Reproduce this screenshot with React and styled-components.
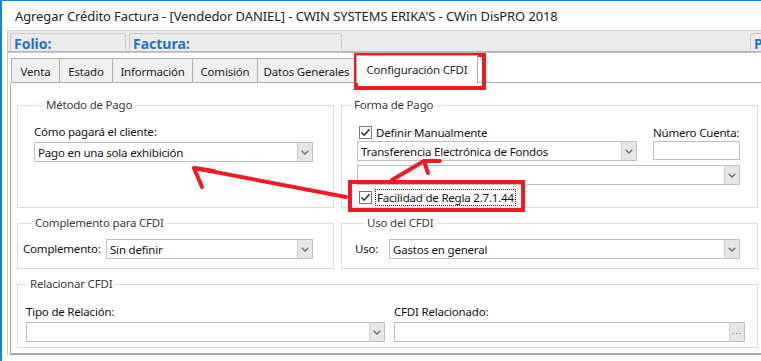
import React from 'react'
import styled, { createGlobalStyle } from 'styled-components'

const GlobalStyle = createGlobalStyle`
  html, body {
    margin: 0;
    padding: 0;
    background: #ffffff;
    overflow: hidden;
  }
  body {
    font-family: "Noto Sans", "Open Sans", sans-serif;
    font-size: 11.5px;
    letter-spacing: -0.2px;
    color: #000;
  }
`

const Window = styled.div`
  position: relative;
  width: 761px;
  height: 361px;
  box-sizing: border-box;
  border-top: 1px solid #1883d7;
  border-left: 2px solid #1883d7;
  background: #fff;
  overflow: hidden;
`

const TitleBar = styled.div`
  height: 29px;
  display: flex;
  align-items: center;
  padding-left: 13px;
  font-size: 13px;
  letter-spacing: -0.1px;
  color: #222;
  white-space: nowrap;
`

const Body = styled.div`
  padding-left: 5px;
`

const Frame = styled.div`
  border-left: 1px solid #c8c8c8;
  width: 900px;
`

const HeaderBand = styled.div`
  display: flex;
  gap: 3px;
  height: 23px;
  padding: 2px 0 0 2px;
  box-sizing: border-box;
  border-top: 1px solid #d6d6d6;
  border-bottom: 2px solid #b7b7b7;
  background: #ebebeb;
`

const HeaderField = styled.div`
  flex-shrink: 0;
  width: ${p => p.$width}px;
  margin-left: ${p => p.$offset || 0}px;
  height: 20px;
  box-sizing: border-box;
  border: 1px solid #c9c9c9;
  border-radius: 2px;
  padding-left: 3px;
  display: flex;
  align-items: center;
  font-weight: bold;
  font-size: 14px;
  letter-spacing: 0;
  color: #1a74cc;
`

const TabArea = styled.div`
  padding: 1px 0 0 2px;
`

const TabStrip = styled.div`
  display: flex;
  align-items: flex-end;
  height: 28px;
  border-bottom: 1px solid #adadad;
  margin-left: 1px;
`

const Tab = styled.div`
  position: relative;
  flex-shrink: 0;
  width: ${p => p.$width}px;
  height: ${p => (p.$active ? 28 : 24)}px;
  margin-right: ${p => (p.$active ? 0 : -1)}px;
  margin-left: ${p => (p.$active ? 1 : 0)}px;
  margin-bottom: ${p => (p.$active ? -1 : 0)}px;
  box-sizing: border-box;
  border: 1px solid #adadad;
  border-bottom: none;
  background: ${p => (p.$active ? '#fff' : '#f0f0f0')};
  z-index: ${p => (p.$active ? 1 : 0)};
  display: flex;
  align-items: center;
  justify-content: center;
  padding-top: ${p => (p.$active ? 0 : 1)}px;
  color: #1e1e1e;
  white-space: nowrap;
`

const TabPanel = styled.div`
  height: 272px;
  box-sizing: border-box;
  border-left: 1px solid #adadad;
  border-bottom: 2px solid #a8a8a8;
  padding: 14px 0 0 6px;
`

const Grid = styled.div`
  display: grid;
  grid-template-columns: 317px 417px;
  grid-template-rows: 111px 54px 72px;
  column-gap: 7px;
  row-gap: 7px;
`

const Group = styled.fieldset`
  grid-column: ${p => p.$span || 'auto'};
  margin: 0;
  min-width: 0;
  box-sizing: border-box;
  border: 1px solid #dcdcdc;
  padding: ${p => p.$pad};
`

const Legend = styled.legend`
  margin-left: 9px;
  padding: 0 3px;
  color: #3a3a3a;
  line-height: 16px;
  font-size: 11.5px;
`

const Label = styled.div`
  color: #111;
  line-height: 16px;
  white-space: nowrap;
  margin: ${p => p.$margin || '0'};
`

const ComboBox = styled.div`
  display: flex;
  width: ${p => (p.$width ? `${p.$width}px` : 'auto')};
  height: 20px;
  box-sizing: border-box;
  border: 1px solid #bfbfbf;
  background: #fff;
  grid-column: ${p => p.$span || 'auto'};
  margin: ${p => p.$margin || '0'};
`

const ComboText = styled.div`
  flex: 1;
  padding-left: 3px;
  display: flex;
  align-items: center;
  white-space: nowrap;
  overflow: hidden;
  color: #111;
`

const DropButton = styled.div`
  width: 15px;
  border-left: 1px solid #cfcfcf;
  background: #e6e6e6;
  display: flex;
  align-items: center;
  justify-content: center;
  color: #666;
  font-size: 9px;
  letter-spacing: 1px;
  padding-bottom: ${p => (p.$dots ? 3 : 0)}px;
  box-sizing: border-box;
`

const TextInput = styled.div`
  height: 19px;
  box-sizing: border-box;
  border: 1px solid #bfbfbf;
  background: #fff;
`

const CheckRow = styled.label`
  display: flex;
  align-items: center;
  gap: 4px;
  margin: ${p => p.$margin || '0'};
  color: #111;
  white-space: nowrap;
`

const CheckBox = styled.span`
  width: 13px;
  height: 13px;
  box-sizing: border-box;
  border: 1px solid #777;
  background: #fff;
  display: inline-flex;
  align-items: center;
  justify-content: center;
`

const Focus = styled.span`
  outline: 1px dotted #222;
  outline-offset: 0;
  padding: 0 1px;
  line-height: 15px;
`

const FormaGrid = styled.div`
  display: grid;
  grid-template-columns: 280px 87px;
  column-gap: 16px;
  padding: 9px 0 0 15px;
`

const FieldRow = styled.div`
  display: grid;
  grid-template-columns: ${p => p.$label}px ${p => p.$field}px;
  align-items: center;
  margin-top: 8px;
`

const RelGrid = styled.div`
  display: grid;
  grid-template-columns: 359px 351px;
  column-gap: 9px;
  padding: 12px 0 0 8px;
`

const Overlay = styled.svg`
  position: absolute;
  left: -2px;
  top: -1px;
  pointer-events: none;
`

const Chevron = () => (
  <svg width="8" height="5" viewBox="0 0 8 5">
    <polyline points="0.7,0.7 4,4 7.3,0.7" fill="none" stroke="#6b6b6b" strokeWidth="1.3" />
  </svg>
)

const Check = () => (
  <svg width="11" height="11" viewBox="0 0 11 11">
    <polyline points="1.5,5.5 4.2,8.2 9.5,2.2" fill="none" stroke="#2b2b2b" strokeWidth="1.6" />
  </svg>
)

const Combo = ({ children, width, span, margin }) => (
  <ComboBox $width={width} $span={span} $margin={margin}>
    <ComboText>{children}</ComboText>
    <DropButton><Chevron /></DropButton>
  </ComboBox>
)

const Checked = ({ children, focused, margin }) => (
  <CheckRow $margin={margin}>
    <CheckBox><Check /></CheckBox>
    {focused ? <Focus>{children}</Focus> : <span>{children}</span>}
  </CheckRow>
)

const tabs = [
  { label: 'Venta', width: 49 },
  { label: 'Estado', width: 54 },
  { label: 'Información', width: 81 },
  { label: 'Comisión', width: 66 },
  { label: 'Datos Generales', width: 99 },
  { label: 'Configuración CFDI', width: 122, active: true },
]

const Annotations = () => (
  <Overlay width="761" height="361" viewBox="0 0 761 361">
    <g fill="none" stroke="#ed1c24" strokeWidth="4" strokeLinecap="round" strokeLinejoin="round">
      <rect x="356" y="55" width="128" height="33" strokeLinecap="butt" strokeLinejoin="miter" />
      <rect x="350" y="182" width="173" height="28" strokeLinecap="butt" strokeLinejoin="miter" />
      <polyline points="346,197 194,168" />
      <polyline points="214,171 194,168 202,187" />
      <polyline points="392,180 424,161" />
      <polyline points="440,161 424,161 428,173" />
    </g>
  </Overlay>
)

export default function App() {
  return (
    <>
      <GlobalStyle />
      <Window>
        <TitleBar>Agregar Crédito Factura - [Vendedor DANIEL] - CWIN SYSTEMS ERIKA'S - CWin DisPRO 2018</TitleBar>
        <Body>
          <Frame>
            <HeaderBand>
              <HeaderField $width={116}>Folio:</HeaderField>
              <HeaderField $width={213}>Factura:</HeaderField>
              <HeaderField $width={60} $offset={405}>P</HeaderField>
            </HeaderBand>
            <TabArea>
              <TabStrip>
                {tabs.map(t => (
                  <Tab key={t.label} $width={t.width} $active={t.active}>{t.label}</Tab>
                ))}
              </TabStrip>
              <TabPanel>
                <Grid>
                  <Group $pad="0 20px 0 16px">
                    <Legend>Método de Pago</Legend>
                    <Label $margin="11px 0 2px 0">Cómo pagará el cliente:</Label>
                    <Combo>Pago en una sola exhibición</Combo>
                  </Group>
                  <Group $pad="0">
                    <Legend>Forma de Pago</Legend>
                    <FormaGrid>
                      <Checked margin="2px 0 1px 2px">Definir Manualmente</Checked>
                      <Label $margin="3px 0 0 0">Número Cuenta:</Label>
                      <Combo>Transferencia Electrónica de Fondos</Combo>
                      <TextInput />
                      <Combo span="1 / span 2" margin="4px 0 0 0"></Combo>
                      <Checked focused margin="5px 0 0 2px">Facilidad de Regla 2.7.1.44</Checked>
                    </FormaGrid>
                  </Group>
                  <Group $pad="0 20px 0 5px">
                    <Legend>Complemento para CFDI</Legend>
                    <FieldRow $label={83} $field={207}>
                      <Label>Complemento:</Label>
                      <Combo>Sin definir</Combo>
                    </FieldRow>
                  </Group>
                  <Group $pad="0 17px 0 13px">
                    <Legend>Uso del CFDI</Legend>
                    <FieldRow $label={34} $field={351}>
                      <Label>Uso:</Label>
                      <Combo>Gastos en general</Combo>
                    </FieldRow>
                  </Group>
                  <Group $span="1 / span 2" $pad="0">
                    <Legend>Relacionar CFDI</Legend>
                    <RelGrid>
                      <Label $margin="0 0 2px 0">Tipo de Relación:</Label>
                      <Label $margin="0 0 2px 0">CFDI Relacionado:</Label>
                      <Combo></Combo>
                      <ComboBox>
                        <ComboText />
                        <DropButton $dots>...</DropButton>
                      </ComboBox>
                    </RelGrid>
                  </Group>
                </Grid>
              </TabPanel>
            </TabArea>
          </Frame>
        </Body>
        <Annotations />
      </Window>
    </>
  )
}
